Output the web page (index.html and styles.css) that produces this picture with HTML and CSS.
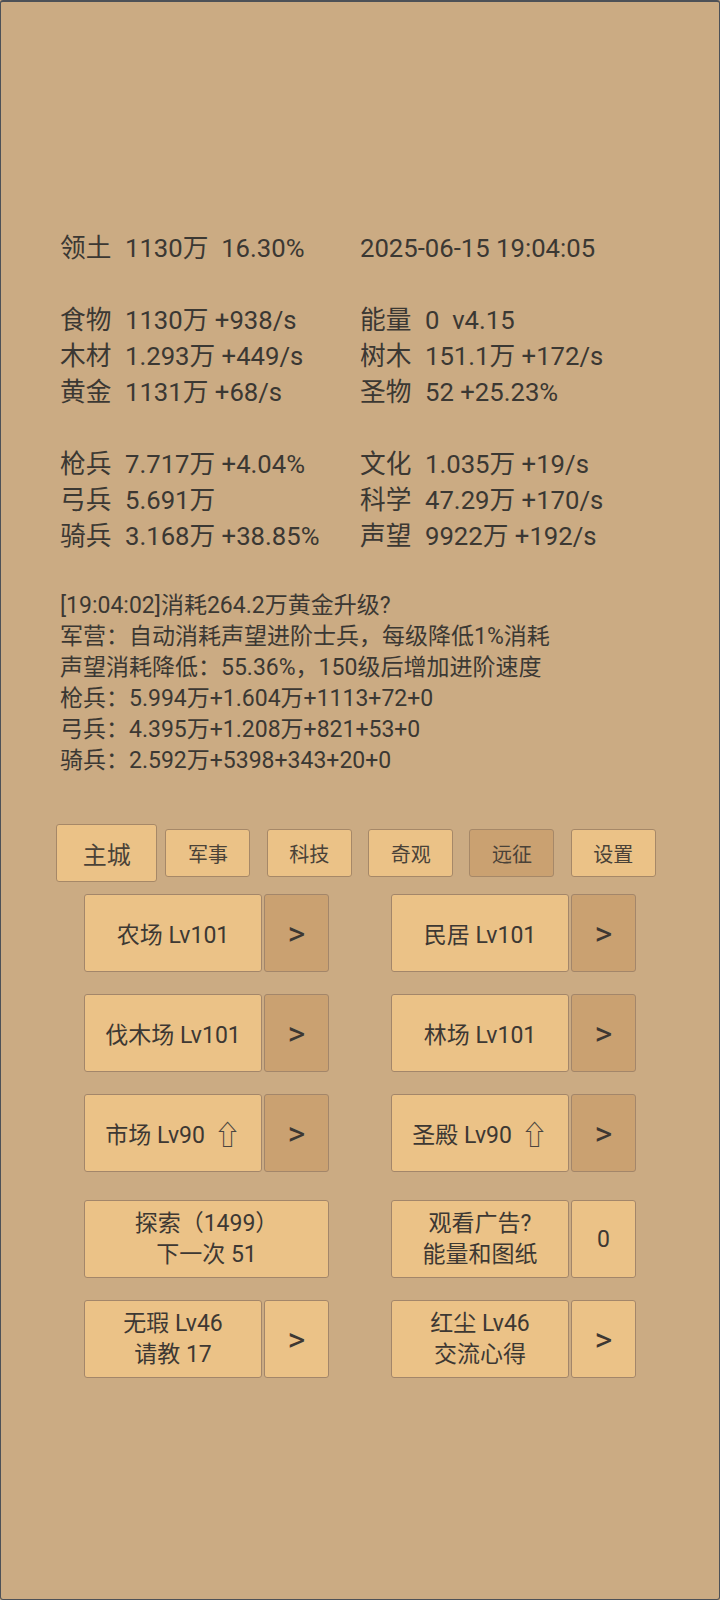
FILE: index.html
```html
<!DOCTYPE html>
<html lang="zh-CN">
<head>
<meta charset="utf-8">
<title>主城</title>
<link rel="stylesheet" href="styles.css">
</head>
<body>
<div class="frame">
  <div class="stats">
    <div class="cell"><span class="lbl">领土</span><span class="val">1130万  16.30%</span></div>
    <div class="cell"><span class="val">2025-06-15 19:04:05</span></div>
    <div class="cell blank"></div><div class="cell blank"></div>
    <div class="cell"><span class="lbl">食物</span><span class="val">1130万 +938/s</span></div>
    <div class="cell"><span class="lbl">能量</span><span class="val">0  v4.15</span></div>
    <div class="cell"><span class="lbl">木材</span><span class="val">1.293万 +449/s</span></div>
    <div class="cell"><span class="lbl">树木</span><span class="val">151.1万 +172/s</span></div>
    <div class="cell"><span class="lbl">黄金</span><span class="val">1131万 +68/s</span></div>
    <div class="cell"><span class="lbl">圣物</span><span class="val">52 +25.23%</span></div>
    <div class="cell blank"></div><div class="cell blank"></div>
    <div class="cell"><span class="lbl">枪兵</span><span class="val">7.717万 +4.04%</span></div>
    <div class="cell"><span class="lbl">文化</span><span class="val">1.035万 +19/s</span></div>
    <div class="cell"><span class="lbl">弓兵</span><span class="val">5.691万</span></div>
    <div class="cell"><span class="lbl">科学</span><span class="val">47.29万 +170/s</span></div>
    <div class="cell"><span class="lbl">骑兵</span><span class="val">3.168万 +38.85%</span></div>
    <div class="cell"><span class="lbl">声望</span><span class="val">9922万 +192/s</span></div>
  </div>

  <div class="log">
    <div class="line">[19:04:02]消耗264.2万黄金升级?</div>
    <div class="line">军营：自动消耗声望进阶士兵，每级降低1%消耗</div>
    <div class="line">声望消耗降低：55.36%，150级后增加进阶速度</div>
    <div class="line">枪兵：5.994万+1.604万+1113+72+0</div>
    <div class="line">弓兵：4.395万+1.208万+821+53+0</div>
    <div class="line">骑兵：2.592万+5398+343+20+0</div>
  </div>

  <div class="tabs">
    <div class="slot"><div class="tab big">主城</div></div>
    <div class="slot"><div class="tab">军事</div></div>
    <div class="slot"><div class="tab">科技</div></div>
    <div class="slot"><div class="tab">奇观</div></div>
    <div class="slot"><div class="tab active">远征</div></div>
    <div class="slot"><div class="tab">设置</div></div>
  </div>

  <div class="buttons">
    <div class="brow">
      <div class="pair"><div class="btn main">农场 Lv101</div><div class="btn arrow dark">&gt;</div></div>
      <div class="pair"><div class="btn main">民居 Lv101</div><div class="btn arrow dark">&gt;</div></div>
    </div>
    <div class="brow">
      <div class="pair"><div class="btn main">伐木场 Lv101</div><div class="btn arrow dark">&gt;</div></div>
      <div class="pair"><div class="btn main">林场 Lv101</div><div class="btn arrow dark">&gt;</div></div>
    </div>
    <div class="brow before-late">
      <div class="pair"><div class="btn main">市场 Lv90&nbsp;<span class="up">⇧</span></div><div class="btn arrow dark">&gt;</div></div>
      <div class="pair"><div class="btn main">圣殿 Lv90&nbsp;<span class="up">⇧</span></div><div class="btn arrow dark">&gt;</div></div>
    </div>
    <div class="brow">
      <div class="pair"><div class="btn wide two"><span>探索（1499）</span><span>下一次 51</span></div></div>
      <div class="pair"><div class="btn main two"><span>观看广告?</span><span>能量和图纸</span></div><div class="btn count">0</div></div>
    </div>
    <div class="brow">
      <div class="pair"><div class="btn main two"><span>无瑕 Lv46</span><span>请教 17</span></div><div class="btn arrow">&gt;</div></div>
      <div class="pair"><div class="btn main two"><span>红尘 Lv46</span><span>交流心得</span></div><div class="btn arrow">&gt;</div></div>
    </div>
  </div>
</div>
</body>
</html>
```

FILE: styles.css
```css
html, body {
  margin: 0;
  padding: 0;
  background: #cbab83;
}

.frame {
  box-sizing: border-box;
  width: 720px;
  height: 1600px;
  background: #cbab83;
  border: 1px solid #4d5157;
  border-top-width: 2px;
  border-radius: 3px;
  color: #3b3833;
  font-family: Roboto, "Noto Sans CJK SC", sans-serif;
  overflow: hidden;
}

.stats {
  display: grid;
  grid-template-columns: 300px 300px;
  padding-left: 59px;
  padding-top: 228px;
  font-size: 25.7px;
  line-height: 36px;
}

.cell {
  height: 36px;
  white-space: pre;
}

.lbl {
  display: inline-block;
  width: 65px;
}

.log {
  margin-top: 36px;
  padding-left: 59px;
  font-size: 23px;
  line-height: 31px;
}

.line {
  height: 31px;
  white-space: nowrap;
}

.tabs {
  display: flex;
  align-items: center;
  width: 608px;
  height: 58px;
  margin: 48px auto 0;
}

.slot {
  flex: 1;
  display: flex;
  justify-content: center;
  align-items: center;
}

.tab {
  box-sizing: border-box;
  width: 85px;
  height: 48px;
  display: flex;
  align-items: center;
  justify-content: center;
  background: #ebc287;
  border: 1px solid #a68868;
  border-radius: 3px;
  font-size: 20px;
  color: #4a4238;
}

.tab.big {
  width: 101px;
  height: 58px;
  font-size: 24px;
}

.tab.active {
  background: #caa171;
}

.buttons {
  margin-top: 12px;
}

.brow {
  display: flex;
  justify-content: center;
  gap: 62px;
  margin-bottom: 22px;
}

.brow.before-late {
  margin-bottom: 28px;
}

.pair {
  display: flex;
  gap: 2px;
  width: 245px;
}

.btn {
  box-sizing: border-box;
  height: 78px;
  display: flex;
  align-items: center;
  justify-content: center;
  background: #ebc287;
  border: 1px solid #a3866a;
  border-radius: 3px;
  font-size: 23px;
  color: #3d3833;
  white-space: nowrap;
}

.btn.main {
  width: 178px;
}

.btn.wide {
  width: 245px;
}

.btn.arrow {
  width: 65px;
  font-size: 34px;
}

.btn.count {
  width: 65px;
}

.btn.dark {
  background: #caa171;
}

.btn.two {
  flex-direction: column;
  line-height: 31px;
}

.up {
  font-family: "DejaVu Sans", sans-serif;
  font-size: 27px;
  font-weight: 200;
  margin-left: 3px;
  color: #4a4540;
}
```
